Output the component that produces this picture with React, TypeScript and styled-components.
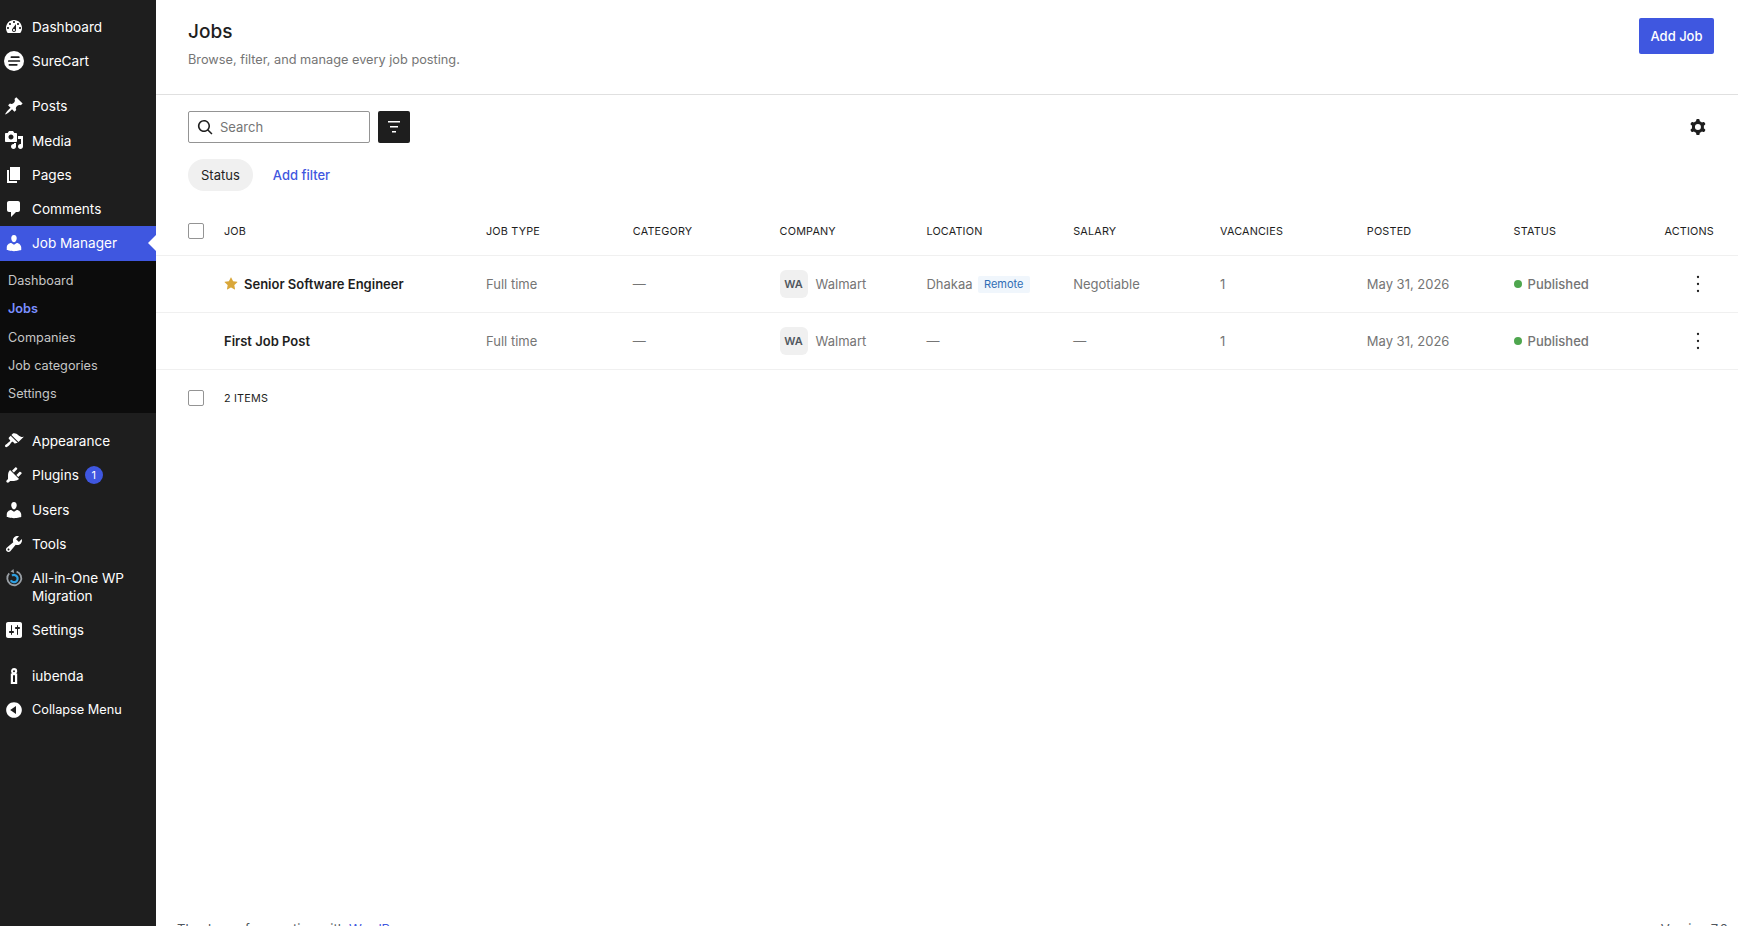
import React from "react";
import styled, { createGlobalStyle } from "styled-components";

const GlobalStyle = createGlobalStyle`
  html, body {
    margin: 0;
    padding: 0;
    height: 100%;
    overflow: hidden;
    background: #fff;
  }
  body {
    font-family: Inter, "Liberation Sans", sans-serif;
    font-size: 13px;
    color: #1e1e1e;
    -webkit-font-smoothing: antialiased;
  }
  * {
    box-sizing: border-box;
  }
`;

const Shell = styled.div`
  display: flex;
  width: 100%;
  height: 926px;
  overflow: hidden;
`;

const Sidebar = styled.nav`
  flex: 0 0 156px;
  width: 156px;
  height: 100%;
  background: #1e1e1e;
  padding-top: 10px;
`;

const MenuItem = styled.div<{ $active?: boolean; $gapTop?: number; $small?: boolean }>`
  position: relative;
  display: flex;
  align-items: center;
  min-height: 34.3px;
  margin-top: ${(p) => p.$gapTop ?? 0}px;
  padding: 8px 8px 8px 32px;
  background: ${(p) => (p.$active ? "#3f57e0" : "transparent")};
  color: #fff;
  font-size: ${(p) => (p.$small ? 12.75 : 13.6)}px;
  line-height: 18px;

  ${(p) =>
    p.$active &&
    `&::after {
      content: "";
      position: absolute;
      right: 0;
      top: 50%;
      margin-top: -8px;
      border: 8px solid transparent;
      border-right-color: #fff;
      border-left-width: 0;
    }`}
`;

const MenuIcon = styled.svg`
  position: absolute;
  left: 4px;
  top: 7px;
  width: 20px;
  height: 20px;
  fill: #fff;
`;

const Badge = styled.span`
  display: inline-flex;
  align-items: center;
  justify-content: center;
  width: 18px;
  height: 18px;
  margin-left: 6px;
  border-radius: 50%;
  background: #3f57e0;
  font-size: 11px;
`;

const SubMenu = styled.div`
  background: #0c0c0c;
  padding: 6px 0 5px;
`;

const SubItem = styled.div<{ $current?: boolean }>`
  display: flex;
  align-items: center;
  height: 28.2px;
  padding-left: 8px;
  font-size: 12.7px;
  color: ${(p) => (p.$current ? "#7b90ff" : "#c6c6c6")};
  font-weight: ${(p) => (p.$current ? 600 : 400)};
`;

const Main = styled.main`
  flex: 1;
  min-width: 0;
  display: flex;
  flex-direction: column;
  height: 100%;
`;

const PageHeader = styled.header`
  display: flex;
  align-items: flex-start;
  justify-content: space-between;
  height: 95px;
  padding: 18px 24px 0 32px;
  border-bottom: 1px solid #e0e0e0;
`;

const Title = styled.h1`
  margin: 0;
  font-size: 19px;
  line-height: 28px;
  font-weight: 500;
  color: #1e1e1e;
`;

const Subtitle = styled.p`
  margin: 5px 0 0;
  font-size: 12.75px;
  line-height: 18px;
  color: #757575;
`;

const PrimaryButton = styled.button`
  width: 75px;
  height: 36px;
  border: 0;
  border-radius: 2px;
  background: #3f57e0;
  color: #fff;
  font: 500 13px Inter, sans-serif;
`;

const Toolbar = styled.div`
  display: flex;
  align-items: center;
  justify-content: space-between;
  padding: 16px 24px 0 32px;
`;

const ToolbarLeft = styled.div`
  display: flex;
  align-items: center;
  gap: 8px;
`;

const SearchBox = styled.label`
  display: flex;
  align-items: center;
  width: 182px;
  height: 32px;
  padding-left: 4px;
  border: 1px solid #949494;
  border-radius: 2px;
  gap: 3px;
`;

const SearchInput = styled.input`
  flex: 1;
  min-width: 0;
  border: 0;
  outline: 0;
  padding: 0;
  background: transparent;
  font: 400 13px Inter, sans-serif;
  color: #1e1e1e;

  &::placeholder {
    color: #757575;
    opacity: 1;
  }
`;

const IconButton = styled.button<{ $dark?: boolean }>`
  display: flex;
  align-items: center;
  justify-content: center;
  width: 32px;
  height: 32px;
  padding: 0;
  border: 0;
  border-radius: 2px;
  background: ${(p) => (p.$dark ? "#1e1e1e" : "transparent")};
  color: ${(p) => (p.$dark ? "#fff" : "#1e1e1e")};

  svg {
    fill: currentColor;
  }
`;

const FilterRow = styled.div`
  display: flex;
  align-items: center;
  gap: 20px;
  padding: 16px 32px;
`;

const FilterPill = styled.span`
  display: inline-flex;
  align-items: center;
  height: 32px;
  padding: 0 13px;
  border-radius: 16px;
  background: #f0f0f0;
  color: #1e1e1e;
  font-size: 13px;
`;

const LinkButton = styled.a`
  color: #3f57e0;
  font-size: 13px;
  font-weight: 500;
  text-decoration: none;
`;

const Row = styled.div<{ $height: number; $plain?: boolean }>`
  display: grid;
  grid-template-columns: 36px 262px repeat(8, 146.8px) 1fr;
  align-items: center;
  height: ${(p) => p.$height}px;
  padding: 0 24px 0 32px;
  border-bottom: ${(p) => (p.$plain ? "0" : "1px solid #f0f0f0")};
  color: #757575;
  font-size: 13px;
`;

const HeadCell = styled.div<{ $right?: boolean }>`
  color: #1e1e1e;
  font-size: 10.8px;
  font-weight: 400;
  letter-spacing: 0.2px;
  text-transform: uppercase;
  white-space: nowrap;
  text-align: ${(p) => (p.$right ? "right" : "left")};
`;

const Checkbox = styled.span`
  display: block;
  width: 16px;
  height: 16px;
  border: 1px solid #949494;
  border-radius: 2px;
  background: #fff;
`;

const JobCell = styled.div`
  display: flex;
  align-items: center;
  gap: 6px;
  color: #1e1e1e;
  font-weight: 600;
`;

const Star = styled.svg`
  width: 14px;
  height: 14px;
  fill: #d9a73a;
`;

const CompanyCell = styled.div`
  display: flex;
  align-items: center;
  gap: 8px;
`;

const Avatar = styled.span`
  display: flex;
  align-items: center;
  justify-content: center;
  width: 28px;
  height: 28px;
  border-radius: 6px;
  background: #f0f0f0;
  color: #50575e;
  font-size: 11px;
  font-weight: 600;
`;

const LocationCell = styled.div`
  display: flex;
  align-items: center;
  gap: 5px;
`;

const RemoteTag = styled.span`
  display: inline-flex;
  align-items: center;
  height: 17px;
  padding: 0 6.5px;
  border-radius: 2px;
  background: #f0f6fc;
  color: #2f6db5;
  font-size: 11px;
  font-weight: 400;
`;

const StatusCell = styled.div`
  display: flex;
  align-items: center;
  gap: 6px;
  font-weight: 500;
`;

const StatusDot = styled.span`
  width: 8px;
  height: 8px;
  border-radius: 50%;
  background: #4ea64e;
`;

const ActionCell = styled.div`
  display: flex;
  justify-content: flex-end;
`;

const Footer = styled.footer`
  display: flex;
  justify-content: space-between;
  flex: 0 0 6px;
  height: 6px;
  margin-top: auto;
  padding: 0 10px 0 21px;
  color: #50575e;
  font-size: 13px;
  line-height: 18px;

  a {
    color: #3f57e0;
    text-decoration: underline;
  }
`;

const FooterText = styled.span`
  white-space: nowrap;
`;

const icons: Record<string, React.ReactNode> = {
  dashboard: (
    <path
      fillRule="evenodd"
      d="M3.76 16h12.48c1.1-1.37 1.76-3.11 1.76-5 0-4.42-3.58-8-8-8s-8 3.58-8 8c0 1.89.66 3.63 1.76 5zM10 4c.55 0 1 .45 1 1s-.45 1-1 1-1-.45-1-1 .45-1 1-1zM6 6c.55 0 1 .45 1 1s-.45 1-1 1-1-.45-1-1 .45-1 1-1zm8 0c.55 0 1 .45 1 1s-.45 1-1 1-1-.45-1-1 .45-1 1-1zm-5.37 5.55L12 7v6c0 1.1-.9 2-2 2s-2-.9-2-2c0-.57.24-1.08.63-1.45zM4 10c.55 0 1 .45 1 1s-.45 1-1 1-1-.45-1-1 .45-1 1-1zm12 0c.55 0 1 .45 1 1s-.45 1-1 1-1-.45-1-1 .45-1 1-1zm-5 3c0-.55-.45-1-1-1s-1 .45-1 1 .45 1 1 1 1-.45 1-1z"
    />
  ),
  surecart: (
    <>
      <circle cx="10" cy="10" r="10" />
      <g fill="none" stroke="#1e1e1e" strokeWidth="1.7" strokeLinecap="round">
        <path d="M7.4 6.2h7.4" />
        <path d="M4.8 10h10.6" />
        <path d="M5.4 13.8h7.4" />
      </g>
    </>
  ),
  posts: (
    <path d="M10.44 3.02l1.82-1.82 6.36 6.35-1.83 1.82c-1.05-.68-2.48-.57-3.41.36l-.75.75c-.92.93-1.04 2.35-.35 3.41l-1.83 1.82-2.41-2.41-2.8 2.79c-.42.42-3.38 2.71-3.8 2.29s1.86-3.39 2.28-3.81l2.79-2.79L4.1 9.36l1.83-1.82c1.05.69 2.48.57 3.4-.36l.75-.75c.93-.92 1.05-2.35.36-3.41z" />
  ),
  media: (
    <path
      fillRule="evenodd"
      d="M13 11V4c0-.55-.45-1-1-1h-1.67L9 1H5L3.67 3H2c-.55 0-1 .45-1 1v7c0 .55.45 1 1 1h10c.55 0 1-.45 1-1zM7 4.5c1.38 0 2.5 1.12 2.5 2.5S8.38 9.5 7 9.5 4.5 8.38 4.5 7 5.62 4.5 7 4.5zM14 6h5v10.5c0 1.38-1.12 2.5-2.5 2.5S14 17.88 14 16.5s1.12-2.5 2.5-2.5c.17 0 .34.02.5.05V9h-3V6zm-4 8.05V13h2v3.5c0 1.38-1.12 2.5-2.5 2.5S7 17.88 7 16.5 8.12 14 9.5 14c.17 0 .34.02.5.05z"
    />
  ),
  pages: <path d="M6 15V2h10v13H6zm-1 1h8v2H3V5h2v11z" />,
  comments: (
    <path d="M5 2h9c1.1 0 2 .9 2 2v7c0 1.1-.9 2-2 2h-2l-5 5v-5H5c-1.1 0-2-.9-2-2V4c0-1.1.9-2 2-2z" />
  ),
  users: (
    <path d="M10 9.25c-2.27 0-2.73-3.44-2.73-3.44C7 4.02 7.82 2 9.97 2c2.16 0 2.98 2.02 2.71 3.81 0 0-.41 3.44-2.68 3.44zm0 2.57L12.72 10c2.39 0 4.52 2.33 4.52 4.53v2.49s-3.65 1.13-7.24 1.13c-3.65 0-7.24-1.13-7.24-1.13v-2.49c0-2.25 1.94-4.48 4.47-4.48z" />
  ),
  appearance: (
    <path d="M14.48 11.06L7.41 3.99l1.5-1.5c.5-.56 2.3-.47 3.51.32 1.21.8 1.43 1.28 2.91 2.1 1.18.64 2.45 1.26 4.45.85zm-.71.71L6.7 4.7 4.93 6.47c-.39.39-.39 1.02 0 1.41l1.06 1.06c.39.39.39 1.03 0 1.42-.6.6-1.43 1.11-2.21 1.69-.35.26-.7.53-1.01.84C1.43 13.23.4 14.89 1.31 15.8c.9.91 2.57-.13 3.91-1.48.31-.31.58-.66.85-1.01.57-.78 1.08-1.61 1.69-2.21.39-.39 1.02-.39 1.41 0l1.06 1.06c.39.39 1.02.39 1.41 0z" />
  ),
  plugins: (
    <path d="M13.11 4.36L9.87 7.6 8 5.73l3.24-3.24c.35-.34 1.05-.2 1.56.32.52.51.66 1.21.31 1.55zm-8 1.77l.91-1.12 9.01 9.01-1.19.84c-.71.71-2.63 1.16-3.82 1.16H6.14L4.9 17.26c-.59.59-1.54.59-2.12 0-.59-.58-.59-1.53 0-2.12l1.24-1.24v-3.88c0-1.13.4-3.19 1.09-3.89zm7.26 3.97l3.24-3.24c.34-.35 1.04-.21 1.55.31.52.51.66 1.21.31 1.55l-3.24 3.25z" />
  ),
  tools: (
    <path
      fillRule="evenodd"
      d="M16.68 9.77c-1.34 1.34-3.3 1.67-4.95.99l-5.41 6.52c-.99.99-2.59.99-3.58 0s-.99-2.59 0-3.57l6.52-5.42c-.68-1.65-.35-3.61.99-4.95 1.28-1.28 3.12-1.62 4.72-1.06l-2.89 2.89 2.82 2.82 2.86-2.87c.53 1.58.18 3.39-1.08 4.65zM3.81 16.21c.4.39 1.04.39 1.43 0 .4-.4.4-1.04 0-1.43-.39-.4-1.03-.4-1.43 0-.39.39-.39 1.03 0 1.43z"
    />
  ),
  migration: (
    <>
      <path
        d="M12.6 3.6A7 7 0 1 1 5.2 5.4"
        fill="none"
        stroke="#9aa0a6"
        strokeWidth="1.8"
      />
      <path d="M9.5 1l.6 4-3.6-1.4z" fill="#9aa0a6" />
      <path
        d="M8 7.6a3.6 3.6 0 1 1-1.2 4.6"
        fill="none"
        stroke="#2f9fe0"
        strokeWidth="2.2"
      />
    </>
  ),
  settings: (
    <path
      fillRule="evenodd"
      d="M18 16V4c0-1.1-.9-2-2-2H4c-1.1 0-2 .9-2 2v12c0 1.1.9 2 2 2h12c1.1 0 2-.9 2-2zM8 11h1c.55 0 1 .45 1 1s-.45 1-1 1H8v1.5c0 .28-.22.5-.5.5s-.5-.22-.5-.5V13H6c-.55 0-1-.45-1-1s.45-1 1-1h1V5.5c0-.28.22-.5.5-.5s.5.22.5.5V11zm5-2h-1c-.55 0-1-.45-1-1s.45-1 1-1h1V5.5c0-.28.22-.5.5-.5s.5.22.5.5V7h1c.55 0 1 .45 1 1s-.45 1-1 1h-1v5.5c0 .28-.22.5-.5.5s-.5-.22-.5-.5V9z"
    />
  ),
  iubenda: (
    <path
      fillRule="evenodd"
      d="M10 2a3.2 3.2 0 0 1 3.2 3.2c0 1-.5 1.8-1.2 2.3h1.2V18H6.8V7.5H8a3.2 3.2 0 0 1 2-5.5zm0 2.2a1 1 0 1 0 0 2 1 1 0 0 0 0-2zM9 9.2V16h2V9.2H9z"
    />
  ),
  collapse: (
    <path
      fillRule="evenodd"
      d="M10 2.16c4.33 0 7.84 3.51 7.84 7.84s-3.51 7.84-7.84 7.84S2.16 14.33 2.16 10 5.71 2.16 10 2.16zm2 11.72V6.12L6.18 9.88z"
    />
  ),
};

const Icon = ({ name }: { name: string }) => (
  <MenuIcon viewBox="0 0 20 20" aria-hidden="true">
    {icons[name]}
  </MenuIcon>
);

const Kebab = () => (
  <IconButton aria-label="Actions">
    <svg width="24" height="24" viewBox="0 0 24 24">
      <circle cx="12" cy="5" r="1.15" />
      <circle cx="12" cy="12" r="1.15" />
      <circle cx="12" cy="19" r="1.15" />
    </svg>
  </IconButton>
);

const columns = [
  "Job type",
  "Category",
  "Company",
  "Location",
  "Salary",
  "Vacancies",
  "Posted",
  "Status",
];

const jobs = [
  { title: "Senior Software Engineer", featured: true, location: "Dhakaa", remote: true, salary: "Negotiable" },
  { title: "First Job Post", featured: false, location: "—", remote: false, salary: "—" },
];

export default function App() {
  return (
    <>
      <GlobalStyle />
      <Shell>
        <Sidebar>
          <MenuItem><Icon name="dashboard" />Dashboard</MenuItem>
          <MenuItem><Icon name="surecart" />SureCart</MenuItem>
          <MenuItem $gapTop={10.5}><Icon name="posts" />Posts</MenuItem>
          <MenuItem><Icon name="media" />Media</MenuItem>
          <MenuItem><Icon name="pages" />Pages</MenuItem>
          <MenuItem><Icon name="comments" />Comments</MenuItem>
          <MenuItem $active><Icon name="users" />Job Manager</MenuItem>
          <SubMenu>
            <SubItem>Dashboard</SubItem>
            <SubItem $current>Jobs</SubItem>
            <SubItem>Companies</SubItem>
            <SubItem>Job categories</SubItem>
            <SubItem>Settings</SubItem>
          </SubMenu>
          <MenuItem $gapTop={11.5}><Icon name="appearance" />Appearance</MenuItem>
          <MenuItem><Icon name="plugins" />Plugins<Badge>1</Badge></MenuItem>
          <MenuItem><Icon name="users" />Users</MenuItem>
          <MenuItem><Icon name="tools" />Tools</MenuItem>
          <MenuItem><Icon name="migration" />All-in-One WP Migration</MenuItem>
          <MenuItem><Icon name="settings" />Settings</MenuItem>
          <MenuItem $gapTop={11}><Icon name="iubenda" />iubenda</MenuItem>
          <MenuItem $small><Icon name="collapse" />Collapse Menu</MenuItem>
        </Sidebar>
        <Main>
          <PageHeader>
            <div>
              <Title>Jobs</Title>
              <Subtitle>Browse, filter, and manage every job posting.</Subtitle>
            </div>
            <PrimaryButton>Add Job</PrimaryButton>
          </PageHeader>
          <Toolbar>
            <ToolbarLeft>
              <SearchBox>
                <svg width="24" height="24" viewBox="0 0 24 24" fill="#1e1e1e" style={{ transform: "scaleX(-1)" }}>
                  <path d="M13 5c-3.3 0-6 2.7-6 6 0 1.4.5 2.7 1.3 3.7l-3.8 3.8 1.1 1.1 3.8-3.8c1 .8 2.3 1.3 3.7 1.3 3.3 0 6-2.7 6-6S16.3 5 13 5zm0 10.5c-2.5 0-4.5-2-4.5-4.5s2-4.5 4.5-4.5 4.5 2 4.5 4.5-2 4.5-4.5 4.5z" />
                </svg>
                <SearchInput placeholder="Search" />
              </SearchBox>
              <IconButton $dark aria-label="Filter">
                <svg width="24" height="24" viewBox="0 0 24 24">
                  <path d="M10 17.5H14V16H10V17.5ZM6 6V7.5H18V6H6ZM8 12.5H16V11H8V12.5Z" />
                </svg>
              </IconButton>
            </ToolbarLeft>
            <IconButton aria-label="View options">
              <svg width="24" height="24" viewBox="0 0 24 24">
                <path
                  fillRule="evenodd"
                  d="M10.289 4.836A1 1 0 0 1 11.275 4h1.306a1 1 0 0 1 .987.836l.244 1.466c.787.26 1.503.679 2.108 1.218l1.393-.522a1 1 0 0 1 1.216.437l.653 1.13a1 1 0 0 1-.23 1.273l-1.148.944a6.025 6.025 0 0 1 0 2.435l1.149.946a1 1 0 0 1 .23 1.272l-.653 1.13a1 1 0 0 1-1.216.437l-1.394-.522c-.605.54-1.32.958-2.108 1.218l-.244 1.466a1 1 0 0 1-.987.836h-1.306a1 1 0 0 1-.986-.836l-.244-1.466a5.995 5.995 0 0 1-2.108-1.218l-1.394.522a1 1 0 0 1-1.217-.436l-.653-1.131a1 1 0 0 1 .23-1.272l1.149-.946a6.026 6.026 0 0 1 0-2.435l-1.148-.944a1 1 0 0 1-.23-1.272l.653-1.131a1 1 0 0 1 1.217-.437l1.393.522a5.994 5.994 0 0 1 2.108-1.218l.244-1.466ZM14.929 12a3 3 0 1 1-6 0 3 3 0 0 1 6 0Z"
                />
              </svg>
            </IconButton>
          </Toolbar>
          <FilterRow>
            <FilterPill>Status</FilterPill>
            <LinkButton href="#">Add filter</LinkButton>
          </FilterRow>
          <Row $height={49}>
            <Checkbox />
            <HeadCell>Job</HeadCell>
            {columns.map((c) => (
              <HeadCell key={c}>{c}</HeadCell>
            ))}
            <HeadCell $right>Actions</HeadCell>
          </Row>
          {jobs.map((job) => (
            <Row $height={57} key={job.title}>
              <span />
              <JobCell>
                {job.featured && (
                  <Star viewBox="4 4 16 16">
                    <path d="M11.776 4.454a.25.25 0 01.448 0l2.069 4.192a.25.25 0 00.188.137l4.626.672a.25.25 0 01.139.426l-3.348 3.263a.25.25 0 00-.072.222l.79 4.607a.25.25 0 01-.362.263l-4.138-2.175a.25.25 0 00-.232 0l-4.138 2.175a.25.25 0 01-.363-.263l.79-4.607a.25.25 0 00-.071-.222L4.754 9.881a.25.25 0 01.139-.426l4.626-.672a.25.25 0 00.188-.137l2.069-4.192z" />
                  </Star>
                )}
                {job.title}
              </JobCell>
              <div>Full time</div>
              <div>—</div>
              <CompanyCell>
                <Avatar>WA</Avatar>
                Walmart
              </CompanyCell>
              <LocationCell>
                {job.location}
                {job.remote && <RemoteTag>Remote</RemoteTag>}
              </LocationCell>
              <div>{job.salary}</div>
              <div>1</div>
              <div>May 31, 2026</div>
              <StatusCell>
                <StatusDot />
                Published
              </StatusCell>
              <ActionCell>
                <Kebab />
              </ActionCell>
            </Row>
          ))}
          <Row $height={56} $plain>
            <Checkbox />
            <HeadCell>2 items</HeadCell>
          </Row>
          <Footer>
            <FooterText>
              Thank you for creating with <a href="#">WordPress</a>.
            </FooterText>
            <FooterText>Version 7.0</FooterText>
          </Footer>
        </Main>
      </Shell>
    </>
  );
}
